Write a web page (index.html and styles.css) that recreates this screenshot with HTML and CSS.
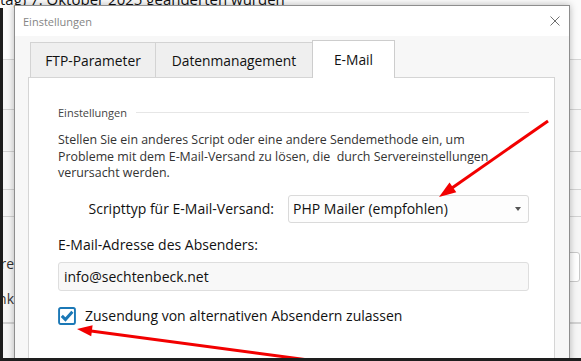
FILE: index.html
```html
<!DOCTYPE html>
<html lang="de">
<head>
  <meta charset="UTF-8">
  <title>Einstellungen</title>
  <link rel="stylesheet" href="styles.css">
</head>
<body>
  <div class="screen">
    <div class="page">
      <div class="page-head">tag) 7. Oktober 2025 geänderten wurden</div>
      <div class="page-row row-a"></div>
      <div class="page-row row-b"></div>
      <div class="page-row row-c"></div>
      <div class="page-row row-d"></div>
      <div class="page-row row-e">
        <div class="page-labels"><span>ere</span><span>nk</span></div>
        <div class="page-field"></div>
      </div>
      <div class="page-row"></div>
    </div>

    <div class="dialog">
      <div class="dialog-title">
        <span>Einstellungen</span>
        <svg class="close" viewBox="0 0 10 10"><path d="M0.5 0.5 L9.5 9.5 M9.5 0.5 L0.5 9.5"/></svg>
      </div>
      <div class="dialog-body">
        <div class="tabs">
          <div class="tab tab-ftp">FTP-Parameter</div>
          <div class="tab tab-data">Datenmanagement</div>
          <div class="tab tab-mail active">E-Mail</div>
        </div>
        <div class="panel">
          <div class="group-title"><span>Einstellungen</span><i></i></div>
          <p class="hint">Stellen Sie ein anderes Script oder eine andere Sendemethode ein, um<br>Probleme mit dem E-Mail-Versand zu lösen, die&nbsp; durch Servereinstellungen<br>verursacht werden.</p>
          <div class="form-row">
            <label>Scripttyp für E-Mail-Versand:</label>
            <div class="select">PHP Mailer (empfohlen)<span class="caret"></span></div>
          </div>
          <div class="field-label">E-Mail-Adresse des Absenders:</div>
          <div class="input">info@sechtenbeck.net</div>
          <label class="check">
            <svg class="box" viewBox="0 0 17 17">
              <rect x="1" y="1" width="15" height="15" rx="1.5"/>
              <path d="M3.6 8.4 L7 11.9 L13.6 4.4"/>
            </svg>
            Zusendung von alternativen Absendern zulassen
          </label>
        </div>
      </div>
    </div>

    <!-- annotation arrows on top of the screenshot -->
    <svg class="arrows" viewBox="0 0 581 361">
      <line x1="548" y1="121" x2="452" y2="188"/>
      <polygon points="439,197 456.3,192.2 449.5,182.4"/>
      <line x1="316" y1="361" x2="91" y2="331"/>
      <polygon points="77,329 91.2,336.3 92.6,325.3"/>
    </svg>
  </div>
</body>
</html>
```

FILE: styles.css
```css
body {
  margin: 0;
  font-family: 'Open Sans', 'Noto Sans', sans-serif;
  color: #111;
}
.screen {
  position: relative;
  width: 581px;
  height: 361px;
  overflow: hidden;
  background: #f6f6f6;
}
.screen::before {
  content: '';
  position: absolute;
  left: 0;
  top: 8px;
  bottom: 0;
  width: 3px;
  background: #1e1e1e;
  z-index: 10;
}
.screen::after {
  content: '';
  position: absolute;
  left: 0;
  right: 0;
  bottom: 0;
  height: 3px;
  background: #1e1e1e;
  z-index: 10;
}

/* page behind the dialog */
.page {
  margin-top: -8px;
}
.page-head {
  height: 68px;
  font-size: 15px;
  line-height: 14px;
  white-space: nowrap;
  border-bottom: 1px solid #d6d6d6;
  box-sizing: border-box;
  background: #fbfbfb;
}
.page-row {
  border-bottom: 1px solid #d2d2d2;
  box-sizing: border-box;
}
.row-a { height: 50px; }
.row-b { height: 42px; }
.row-c { height: 38px; }
.row-d { height: 27px; }
.row-e {
  height: 106px;
  display: flex;
  justify-content: space-between;
}
.page-labels {
  width: 14px;
  overflow: hidden;
  display: flex;
  flex-direction: column;
  align-items: flex-end;
  gap: 15px;
  padding-top: 37px;
  font-size: 14px;
  line-height: 20px;
  color: #333;
}
.page-field {
  width: 30px;
  height: 30px;
  margin: 35px 1px 0 0;
  border: 1px solid #c9c9c9;
  border-radius: 3px;
  background: #fff;
  box-sizing: border-box;
}

/* dialog window */
.dialog {
  position: absolute;
  left: 14px;
  top: 5px;
  width: 556px;
  height: 380px;
  border: 1px solid #8e8e8e;
  box-sizing: border-box;
  box-shadow: 0 0 7px rgba(0,0,0,0.28);
  display: flex;
  flex-direction: column;
  background: #f7f7f7;
}
.dialog-title {
  height: 30px;
  flex: none;
  background: #fff;
  display: flex;
  align-items: center;
  justify-content: space-between;
  padding: 0 9px 0 8px;
  font-size: 11px;
  color: #858585;
}
.close {
  width: 10px;
  height: 10px;
  stroke: #707070;
  stroke-width: 1;
  fill: none;
}
.dialog-body {
  flex: 1;
  display: flex;
  flex-direction: column;
  padding: 4px 14px 0 13px;
}
.tabs {
  height: 37px;
  display: flex;
  align-items: flex-end;
  padding-left: 2px;
}
.tab {
  height: 35px;
  box-sizing: border-box;
  border: 1px solid #d3d3d3;
  border-bottom: none;
  background: #efefef;
  margin-right: -1px;
  display: flex;
  align-items: center;
  justify-content: center;
  font-size: 13.8px;
  color: #111;
}
.tab-ftp { width: 126px; }
.tab-data { width: 158px; }
.tab-mail { width: 83px; }
.tab.active {
  height: 38px;
  margin-bottom: -1px;
  padding-bottom: 1px;
  background: #fff;
  border-color: #cdcdcd;
  position: relative;
  z-index: 1;
}
.panel {
  flex: 1;
  background: #fff;
  border: 1px solid #d5d5d5;
  padding: 0 25px 0 29px;
}

.group-title {
  margin-top: 28px;
  display: flex;
  align-items: center;
  gap: 9px;
  font-size: 11px;
  line-height: 14px;
  color: #444;
}
.group-title i {
  flex: 1;
  border-top: 1px solid #e6e6e6;
  margin-top: -1px;
}
.hint {
  margin: 12px 0 0;
  font-size: 12.4px;
  line-height: 16.5px;
  color: #333;
  white-space: nowrap;
}
.form-row {
  margin-top: 13px;
  display: grid;
  grid-template-columns: 216px 1fr;
  gap: 14px;
  align-items: center;
  font-size: 14px;
}
.form-row label {
  text-align: right;
}
.select {
  height: 28px;
  box-sizing: border-box;
  border: 1px solid #dadada;
  border-radius: 3px;
  background: #fdfdfd;
  display: flex;
  align-items: center;
  justify-content: space-between;
  padding: 0 7px 0 4px;
}
.caret {
  width: 0;
  height: 0;
  border-left: 3.5px solid transparent;
  border-right: 3.5px solid transparent;
  border-top: 4px solid #555;
}
.field-label {
  margin-top: 12px;
  font-size: 14px;
  line-height: 20px;
}
.input {
  margin-top: 7px;
  height: 29px;
  box-sizing: border-box;
  border: 1px solid #dedede;
  border-radius: 3px;
  background: #f8f8f8;
  display: flex;
  align-items: center;
  padding-left: 5px;
  font-size: 14px;
}
.check {
  margin-top: 16px;
  height: 18px;
  display: flex;
  align-items: center;
  gap: 9px;
  font-size: 14px;
}
.box {
  width: 18px;
  height: 18px;
  flex: none;
}
.box rect {
  fill: #fff;
  stroke: #1b78b6;
  stroke-width: 1.8;
}
.box path {
  fill: none;
  stroke: #1b78b6;
  stroke-width: 2.8;
}

.arrows {
  position: absolute;
  left: 0;
  top: 0;
  width: 581px;
  height: 361px;
  z-index: 5;
  pointer-events: none;
}
.arrows line {
  stroke: #f20000;
  stroke-width: 3;
}
.arrows polygon {
  fill: #f20000;
}
```
